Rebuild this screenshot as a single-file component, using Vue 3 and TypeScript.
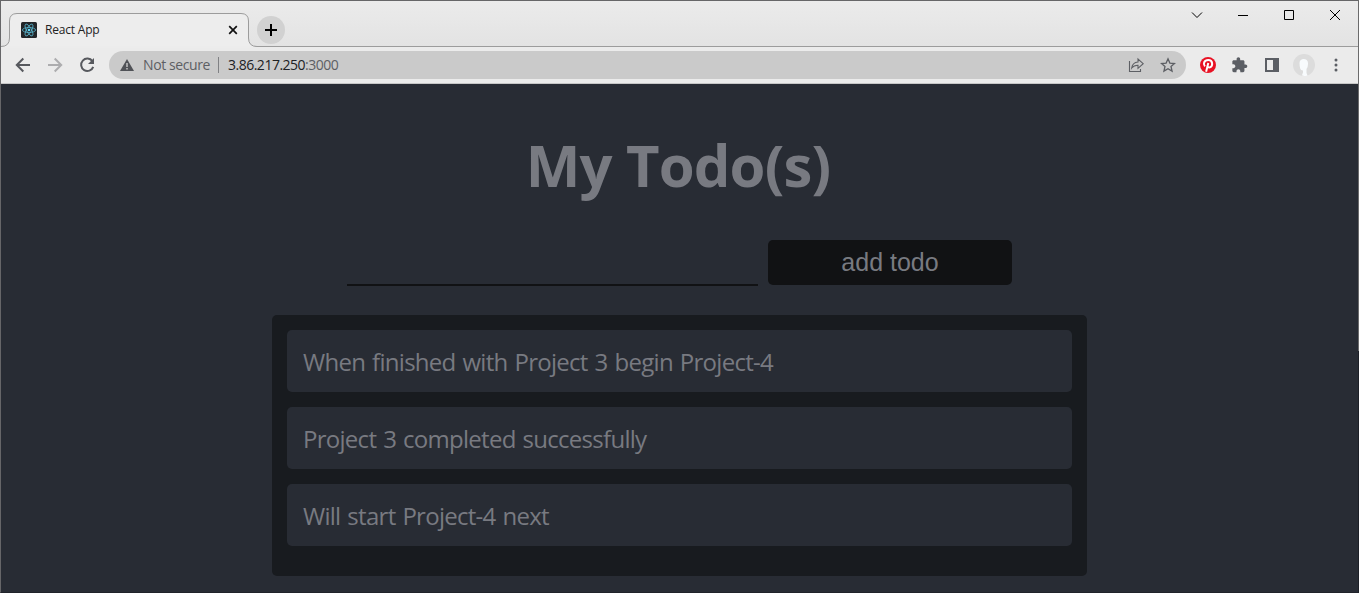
<script setup lang="ts">
import { ref } from 'vue'

interface Todo {
  id: number
  text: string
}

const draft = ref('')
const todos = ref<Todo[]>([
  { id: 1, text: 'When finished with Project 3 begin Project-4' },
  { id: 2, text: 'Project 3 completed successfully' },
  { id: 3, text: 'Will start Project-4 next' },
])

function addTodo(): void {
  const text = draft.value.trim()
  if (!text) return
  todos.value.push({ id: Date.now(), text })
  draft.value = ''
}
</script>

<template>
  <div class="window">
    <header class="tabstrip">
      <svg class="tab-shape" width="256" height="35" viewBox="0 0 256 35">
        <path class="tab-fill" d="M0 35V34.500Q8.500 34.500 8.500 26V9Q8.500 1.500 16 1.500H240Q247.500 1.500 247.500 9V26Q247.500 34.500 256 34.500V35Z" />
        <path class="tab-line" d="M0 34.500Q8.500 34.500 8.500 26V9Q8.500 1.500 16 1.500H240Q247.500 1.500 247.500 9V26Q247.500 34.500 256 34.500" />
      </svg>
      <div class="tab">
        <svg class="favicon" width="16" height="16" viewBox="0 0 16 16">
          <rect width="16" height="16" rx="1.500" fill="#222528" />
          <g fill="none" stroke="#58b4cc" stroke-width="0.800">
            <ellipse cx="8" cy="8" rx="6.600" ry="2.500" />
            <ellipse cx="8" cy="8" rx="6.600" ry="2.500" transform="rotate(60 8 8)" />
            <ellipse cx="8" cy="8" rx="6.600" ry="2.500" transform="rotate(120 8 8)" />
          </g>
          <circle cx="8" cy="8" r="1.300" fill="#61dafb" />
        </svg>
        <span class="tab-title">React App</span>
        <svg class="tab-close" width="10" height="10" viewBox="0 0 10 10">
          <path d="M1.200 1.200L8.800 8.800M8.800 1.200L1.200 8.800" fill="none" stroke="#111" stroke-width="1.700" />
        </svg>
      </div>
      <div class="new-tab">
        <svg width="12" height="12" viewBox="0 0 12 12">
          <path d="M6 0V12M0 6H12" stroke="#000" stroke-width="2" />
        </svg>
      </div>
      <div class="controls">
        <svg width="12" height="12" viewBox="0 0 12 12"><path d="M1 3.500L6 8.500L11 3.500" /></svg>
        <svg width="12" height="12" viewBox="0 0 12 12"><path d="M1 6.500H11" /></svg>
        <svg width="12" height="12" viewBox="0 0 12 12"><path d="M1.500 1.500H10.500V10.500H1.500Z" /></svg>
        <svg width="12" height="12" viewBox="0 0 12 12"><path d="M1 1L11 11M11 1L1 11" /></svg>
      </div>
    </header>

    <nav class="toolbar">
      <svg class="nav-icon" width="16" height="16" viewBox="0 0 16 16"><path d="M15 8H2.500M8.300 1.500L1.800 8L8.300 14.500" stroke="#57595e" /></svg>
      <svg class="nav-icon" width="16" height="16" viewBox="0 0 16 16"><path d="M1 8H13.500M7.700 1.500L14.200 8L7.700 14.500" stroke="#adadaf" /></svg>
      <svg class="nav-icon" width="16" height="16" viewBox="0 0 16 16">
        <path d="M13.400 4.200A6.200 6.200 0 1 0 14.200 9.800" stroke="#57595e" />
        <path d="M15 1V7H9Z" fill="#57595e" />
      </svg>
      <div class="address">
        <svg class="warning" width="14" height="12" viewBox="0 0 14 12">
          <path d="M7 0L14 12H0Z" fill="#505257" />
          <path d="M7 4V8M7 9V10.500" stroke="#cacaca" stroke-width="1.400" />
        </svg>
        <span class="insecure">Not secure</span>
        <span class="divider"></span>
        <span class="url"><span class="host">3.86.217.250</span>:3000</span>
        <svg class="share" width="16" height="16" viewBox="0 0 16 16">
          <path d="M1.500 4V14.500H12.500V12" />
          <path d="M3.700 11Q4.500 5.500 10 5V2L15.200 6.700L10 11.300V8.300Q6 8.200 3.700 11Z" />
        </svg>
        <svg class="star" width="16" height="16" viewBox="0 0 16 16">
          <path d="M8 1.800L9.850 6.100L14.500 6.500L11 9.500L12.050 14.100L8 11.650L3.950 14.100L5 9.500L1.500 6.500L6.150 6.100Z" />
        </svg>
      </div>
      <div class="extensions">
        <svg width="16" height="16" viewBox="0 0 16 16">
          <circle cx="8" cy="8" r="8" fill="#e81224" />
          <path d="M4.900 9.300C2.800 7 4.100 3 8.300 3C13 3 13.200 9.200 10 10.300C8.900 10.600 8 10.200 7.500 9.400M8.300 6L6.100 14.700" fill="none" stroke="#fff" stroke-width="2" />
        </svg>
        <svg width="16" height="16" viewBox="1.500 0.500 22.500 22.500">
          <path d="M20.500 11H19V7c0-1.100-.9-2-2-2h-4V3.500C13 2.120 11.880 1 10.500 1S8 2.120 8 3.500V5H4c-1.100 0-2 .9-2 2v3.800h1.500c1.490 0 2.700 1.210 2.700 2.700s-1.210 2.700-2.700 2.700H2V20c0 1.100.9 2 2 2h3.800v-1.500c0-1.490 1.210-2.700 2.700-2.700s2.700 1.210 2.700 2.700V22H17c1.100 0 2-.9 2-2v-4h1.500c1.380 0 2.500-1.120 2.500-2.500S21.880 11 20.500 11z" fill="#5b5e64" />
        </svg>
        <svg width="16" height="16" viewBox="0 0 16 16">
          <path d="M1 1H15V15H1ZM3 3V13H9V3Z" fill="#5b5e64" fill-rule="evenodd" />
        </svg>
        <svg class="avatar" width="22" height="22" viewBox="0 0 22 22">
          <circle cx="11" cy="11" r="11" fill="#dcdcdc" />
          <path d="M6.500 9C6.500 3.500 15 3.500 15 9Q15.200 13 13.500 15V19L14.500 21.400Q11 22.500 9 21.300L10 18.500V16.500Q6.500 17 6.500 9Z" fill="#f8fbfd" />
        </svg>
        <svg class="dots" width="4" height="14" viewBox="0 0 4 14" fill="#5b5e64">
          <circle cx="2" cy="2" r="1.500" /><circle cx="2" cy="7" r="1.500" /><circle cx="2" cy="12" r="1.500" />
        </svg>
      </div>
    </nav>

    <main class="app">
      <h1>My Todo(s)</h1>
      <form @submit.prevent="addTodo">
        <input v-model="draft" type="text" aria-label="Todo" />
        <button type="submit">add todo</button>
      </form>
      <ul>
        <li v-for="todo in todos" :key="todo.id">{{ todo.text }}</li>
      </ul>
    </main>
    <span class="edge"></span>
  </div>
</template>

<style>
html,
body {
  margin: 0;
  overflow: hidden;
}
</style>

<style scoped>
* {
  box-sizing: border-box;
}
svg {
  display: block;
  flex: none;
}
.window {
  position: relative;
  width: 1359px;
  height: 593px;
  border: 1px solid #666668;
  border-right-color: #1d2027;
  border-bottom-color: #20232a;
  background: #282c34;
  font-family: 'Open Sans', 'Noto Sans', sans-serif;
}
.edge {
  position: absolute;
  top: -1px;
  right: -1px;
  width: 1px;
  height: 351px;
  background: #6b6b6c;
}
.tabstrip {
  position: relative;
  display: flex;
  height: 46px;
  padding-left: 8px;
  background: linear-gradient(#ebebeb, #e3e3e3);
  border-bottom: 1px solid #9c9c9c;
}
.tab-shape {
  position: absolute;
  left: 0;
  top: 11px;
}
.tab-fill {
  fill: #ededed;
}
.tab-line {
  fill: none;
  stroke: #9c9c9c;
}
.tab {
  position: relative;
  display: flex;
  align-items: center;
  width: 240px;
  height: 34px;
  margin-top: 12px;
  padding: 0 11px 0 12px;
}
/* hides the strip's bottom line under the active tab */
.tab::after {
  content: '';
  position: absolute;
  left: -3px;
  right: -3px;
  bottom: -1px;
  height: 2px;
  background: #ececec;
}
.tab-title {
  margin-left: 8px;
  color: #222;
  font-size: 12px;
  line-height: 16px;
  letter-spacing: -0.200px;
}
.tab-close {
  margin-left: auto;
}
.new-tab {
  display: grid;
  place-items: center;
  width: 28px;
  height: 28px;
  margin: 15px 0 0 8px;
  border-radius: 50%;
  background: #d1d1d1;
}
.controls {
  display: flex;
  gap: 34px;
  margin: 8px 17px 0 auto;
}
.controls path {
  fill: none;
  stroke: #000;
}
.toolbar {
  display: flex;
  align-items: center;
  height: 37px;
  padding: 0 20px 0 14px;
  background: #ebebeb;
  border-bottom: 1px solid #c6c6c6;
}
.nav-icon {
  margin-right: 16px;
  fill: none;
  stroke-width: 2;
}
.address {
  display: flex;
  align-items: center;
  width: 1077px;
  height: 28px;
  margin-left: -2px;
  padding: 0 10px 0 11px;
  border-radius: 14px;
  background: #cacaca;
  font-size: 14px;
  line-height: 20px;
  color: #5d5f64;
}
.insecure {
  width: 67px;
  margin-left: 9px;
  white-space: nowrap;
  letter-spacing: -0.400px;
}
.divider {
  width: 1px;
  height: 16px;
  margin: 0 9px 0 8px;
  background: #808184;
}
.url {
  letter-spacing: -0.500px;
}
.host {
  color: #202124;
}
.share,
.star {
  fill: none;
  stroke: #5d5f64;
  stroke-width: 1.300;
}
.share {
  margin-left: auto;
  margin-right: 16px;
  stroke-width: 1.100;
}
.extensions {
  display: flex;
  align-items: center;
  gap: 16px;
  margin-left: 14px;
}
.avatar {
  margin: 0 -3px;
}
.dots {
  margin-left: 6px;
}
.app {
  display: flex;
  flex-direction: column;
  align-items: center;
  color: #787a81;
}
h1 {
  margin: 41px 3px 0 0;
  height: 80px;
  font-size: 58px;
  line-height: 80px;
  font-weight: 700;
  letter-spacing: -0.850px;
  white-space: nowrap;
}
form {
  display: flex;
  gap: 10px;
  margin-top: 35px;
}
input {
  width: 411px;
  height: 46px;
  padding: 0;
  border: 0;
  border-bottom: 2px solid #111214;
  outline: none;
  background: transparent;
  color: inherit;
  font: 25px 'Liberation Sans', sans-serif;
}
button {
  width: 244px;
  height: 45px;
  padding: 0;
  border: 0;
  border-radius: 5px;
  background: #111214;
  color: inherit;
  font: 25px 'Liberation Sans', Arial, sans-serif;
}
ul {
  display: flex;
  flex-direction: column;
  gap: 15px;
  width: 815px;
  height: 261px;
  margin: 29px 0 0;
  padding: 15px;
  border-radius: 5px;
  background: #181b1f;
  list-style: none;
}
li {
  height: 62px;
  padding: 0 16px;
  border-radius: 5px;
  background: #282c34;
  font-size: 24px;
  line-height: 64px;
  letter-spacing: -0.720px;
  word-spacing: 1.400px;
  white-space: nowrap;
}
</style>
